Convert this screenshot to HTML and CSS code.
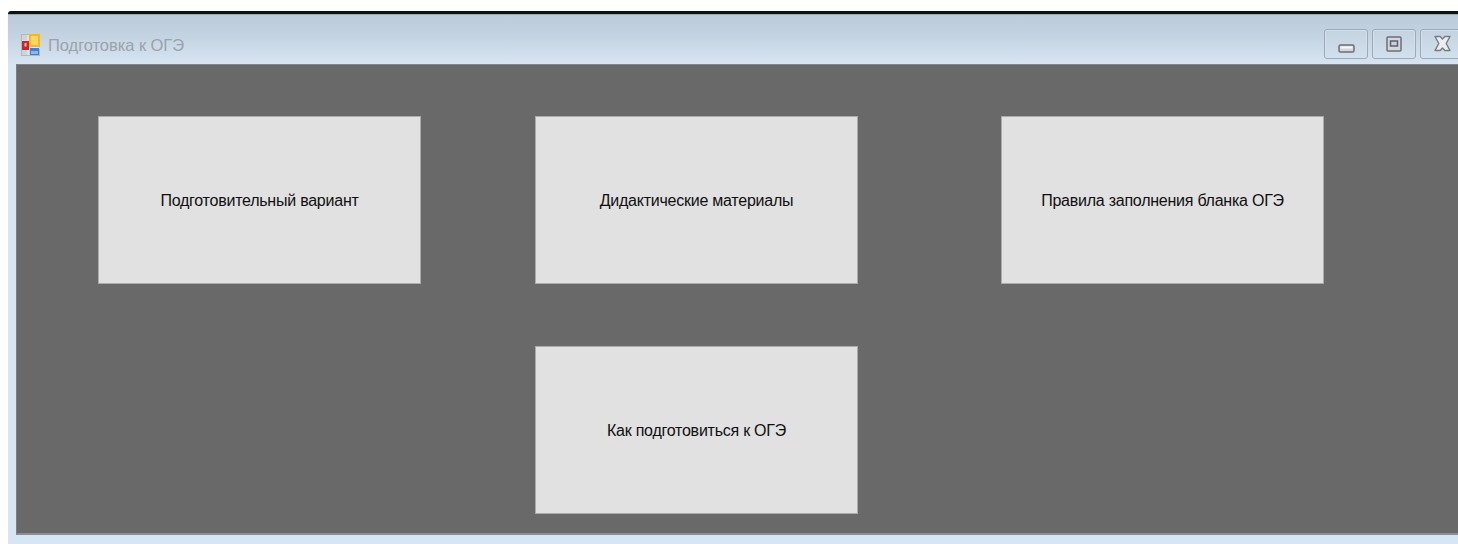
FILE: index.html
```html
<!DOCTYPE html>
<html lang="ru">
<head>
<meta charset="utf-8">
<title>Подготовка к ОГЭ</title>
<link rel="stylesheet" href="styles.css">
</head>
<body>
<div class="window">
  <header class="titlebar">
    <svg class="app-icon" width="20" height="24" viewBox="0 0 20 24">
      <rect x="0.5" y="1.5" width="18" height="21" fill="#cfd4da" stroke="#b4b8bd"/>
      <path d="M1 8h18M1 15h18M7 2v20M13 2v20" stroke="#eef1f4" stroke-width="1"/>
      <rect x="1" y="8" width="7" height="9" fill="#c8262a"/>
      <rect x="3.500" y="10" width="2" height="3.500" fill="#f4c9b0"/>
      <rect x="8" y="1" width="11" height="13" fill="#f7b71d"/>
      <rect x="10" y="3" width="7" height="9" fill="#fdd868"/>
      <rect x="9" y="15" width="9" height="7" fill="#3f7fdc"/>
      <rect x="10" y="18" width="7" height="3" fill="#8db8ef"/>
    </svg>
    <span class="title">Подготовка к ОГЭ</span>
    <div class="controls">
      <button class="ctl" type="button" aria-label="Свернуть">
        <svg class="glyph-min" width="17" height="9" viewBox="0 0 17 9"><rect x="1" y="1" width="15" height="7" rx="1.500" fill="#d4d6d9" stroke="#6a7079" stroke-width="1.500"/><rect x="2.500" y="2.500" width="12" height="2" fill="#f7f7f7"/></svg>
      </button>
      <button class="ctl" type="button" aria-label="Развернуть">
        <svg width="16" height="16" viewBox="0 0 16 16"><rect x="1" y="1" width="14" height="14" rx="1" fill="#d6d7da" stroke="#6a7079" stroke-width="1.500"/><rect x="4.500" y="5" width="7" height="5" fill="#c3d2e4" stroke="#5c626b" stroke-width="1.500"/></svg>
      </button>
      <button class="ctl" type="button" aria-label="Закрыть">
        <svg width="17" height="17" viewBox="0 0 17 17"><path d="M1 1.500h5.200L8.500 4l2.300-2.500H16l-3.800 7 3.800 7h-5.200L8.500 13l-2.300 2.500H1l3.800-7z" fill="#eceded" stroke="#767b83" stroke-width="1.400" stroke-linejoin="round"/></svg>
      </button>
    </div>
  </header>
  <main class="panel">
    <button class="tile" type="button">Подготовительный вариант</button>
    <button class="tile" type="button">Дидактические материалы</button>
    <button class="tile" type="button">Правила заполнения бланка ОГЭ</button>
    <button class="tile tile-center" type="button">Как подготовиться к ОГЭ</button>
  </main>
</div>
</body>
</html>
```

FILE: styles.css
```css
html, body {
  margin: 0;
  height: 100%;
  background: #fff;
  overflow: hidden;
}

body {
  padding: 11px 0 0 8px;
  box-sizing: border-box;
  font-family: "Liberation Sans", Arial, sans-serif;
}

.window {
  height: 533px;
  box-sizing: border-box;
  border-top: 3px solid #111;
  border-top-left-radius: 3px;
  background: #d8e5f3;
  padding: 0 0 9px 8px;
  display: flex;
  flex-direction: column;
}

.titlebar {
  height: 50px;
  margin-left: -8px;
  padding: 0 0 0 13px;
  background: linear-gradient(#bccbd9, #c3d2e0 40%, #d7e5f3);
  box-shadow: inset 0 1px #98a5b1;
  display: flex;
  align-items: center;
  gap: 7px;
}

.app-icon {
  flex: none;
  margin-top: 11px;
}

.title {
  font-size: 16.500px;
  letter-spacing: -0.050px;
  color: #9aa2aa;
  margin-top: 12px;
}

.controls {
  margin-left: auto;
  display: flex;
  gap: 4px;
  margin-top: 9px;
  margin-right: -6px;
}

.ctl {
  width: 44px;
  height: 30px;
  padding: 0;
  border: 1px solid #99a9c0;
  border-radius: 3px;
  background: linear-gradient(#c4d3e1, #d2e0ed);
  box-shadow: inset 0 0 0 1px #d5e0ea;
  display: flex;
  align-items: center;
  justify-content: center;
}

.glyph-min {
  margin-top: 10px;
}

.panel {
  flex: 1;
  min-height: 0;
  box-sizing: border-box;
  background: #696969;
  border-left: 1px solid #7d7f83;
  border-top: 1px solid #80858a;
  border-bottom: 2px solid #8b8e94;
  padding: 51px 0 0 81px;
  display: grid;
  grid-template-columns: 437px 466px 323px;
  grid-template-rows: 168px 168px;
  row-gap: 62px;
}

.tile {
  width: 323px;
  height: 168px;
  padding: 2px 0 0;
  border: 1px solid #ababab;
  background: #e1e1e1;
  color: #101010;
  font: 16px "Liberation Sans", Arial, sans-serif;
  letter-spacing: -0.240px;
}

.tile-center {
  grid-column: 2;
}
```
